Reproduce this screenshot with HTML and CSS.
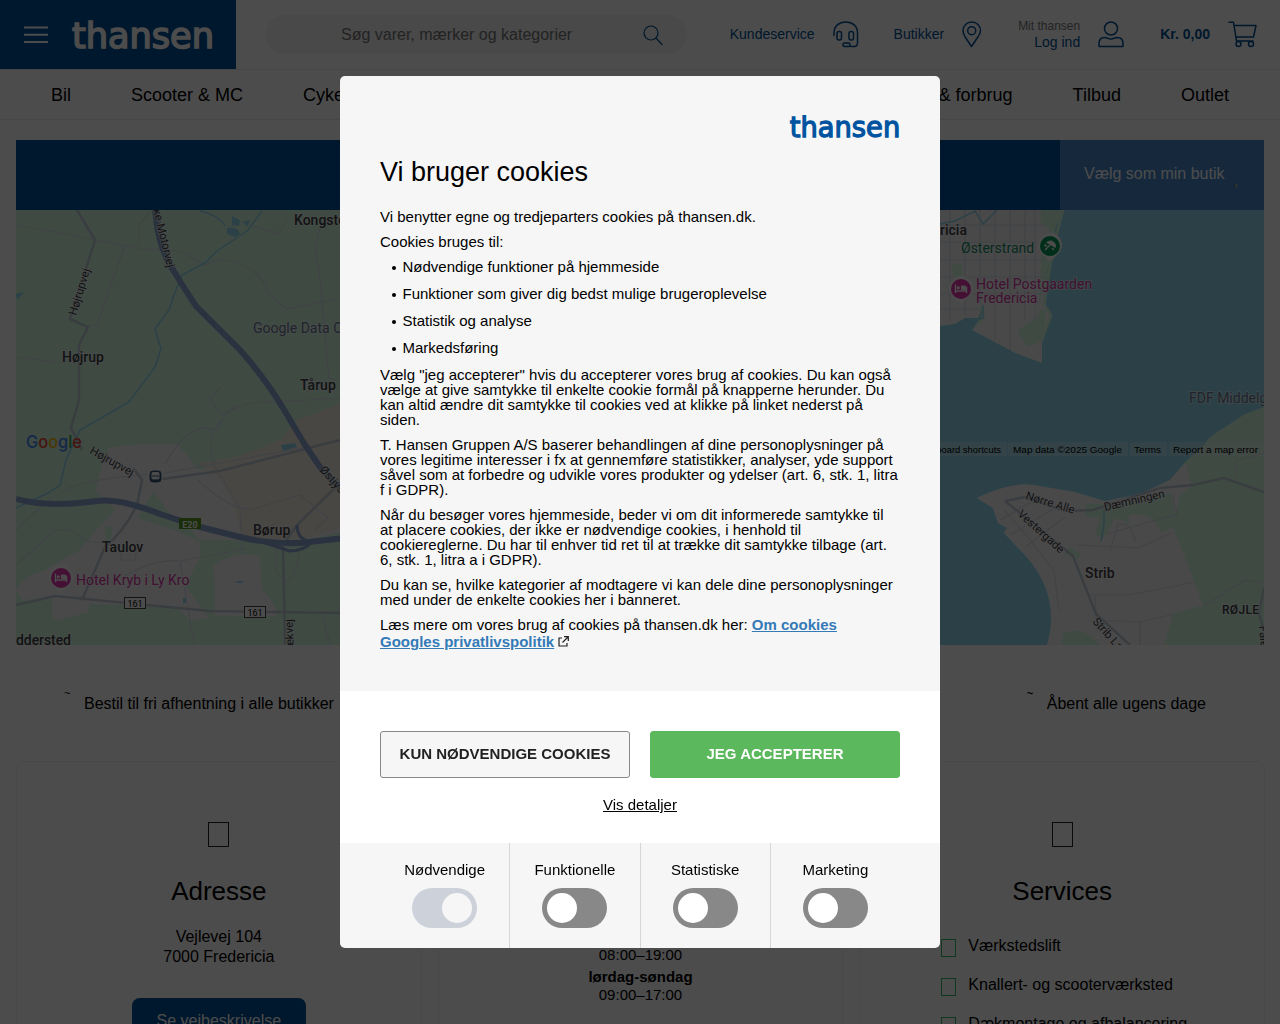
FILE: index.html
```html
<!DOCTYPE html>
<html lang="da">
<head>
<meta charset="utf-8">
<title>thansen</title>
<link rel="stylesheet" href="styles.css">
</head>
<body>
<div class="page">
  <header class="header">
    <div class="brand">
      <svg class="burger" width="24" height="18" viewBox="0 0 24 18"><path d="M0 1.5h24M0 8.8h24M0 16h24"/></svg>
      <svg class="logo" width="144" height="30" viewBox="0 0 144 30"><text x="1" y="27.500" textLength="142" lengthAdjust="spacingAndGlyphs">thansen</text></svg>
    </div>
    <div class="search">
      <span class="search-text">Søg varer, mærker og kategorier</span>
      <svg class="line-icon search-icon" width="22" height="22" viewBox="0 0 22 22"><circle cx="9" cy="9" r="7"/><path d="M14 14l6 6.500"/></svg>
    </div>
    <div class="tools">
      <span class="tool service"><span>Kundeservice</span>
        <svg class="line-icon" width="27" height="27" viewBox="0 0 27 27"><path d="M1 14.500V12C1 5 6 1 12.800 1S24.500 5 24.500 12v10q0 3.500-3.500 3.500h-3.500"/><rect x="4" y="10.500" width="4.500" height="8.500" rx="2"/><rect x="16" y="10.500" width="4.500" height="8.500" rx="2"/><rect x="10" y="22" width="7" height="3.500" rx="1.500"/></svg>
      </span>
      <span class="tool shops"><span>Butikker</span>
        <svg class="line-icon" width="20" height="27" viewBox="0 0 20 27"><path d="M9.500 25.500L3.500 16.500Q1 12.500 1 9.500a8.700 8.500 0 0 1 17.500 0q0 3-3 7z"/><circle cx="9.700" cy="9.700" r="4"/></svg>
      </span>
      <span class="tool account"><span class="account-text"><small>Mit thansen</small>Log ind</span>
        <svg class="line-icon" width="27" height="27" viewBox="0 0 27 27"><circle cx="13" cy="7.500" r="6.500"/><path d="M1 25.500v-2.500q0-6.500 5.500-6.500 2 0 3.500.8t3 .7 3-.7 3.500-.8q5.500 0 5.500 6.500v2.500z"/></svg>
      </span>
      <span class="tool basket"><b>Kr. 0,00</b>
        <svg class="line-icon" width="29" height="27" viewBox="0 0 29 27"><path d="M1 1.200h4.500L8.500 20H25M6.200 4.500H28L25.500 16H8"/><circle cx="10.500" cy="23" r="2.500"/><circle cx="23" cy="23" r="2.500"/></svg>
      </span>
    </div>
  </header>
  <nav class="nav">
    <div class="nav-group"><span>Bil</span><span>Scooter &amp; MC</span><span>Cykel</span></div>
    <div class="nav-group"><span>Olie &amp; forbrug</span><span>Tilbud</span><span>Outlet</span></div>
  </nav>
  <main class="content">
    <div class="band"><div class="choose"><span>Vælg som min butik</span><i>,</i></div></div>
    <svg class="map" width="1248" height="435" viewBox="16 210 1248 435">
      <rect class="land" x="16" y="210" width="1248" height="435"/>
      <g class="urban">
        <path d="M16 590Q25 575 45 570L80 550Q95 530 115 510L95 490 108 448 140 444 178 444 198 470 240 460 300 430 345 400V530L290 545 240 540 200 540 200 558 185 585 208 618 190 620 175 606 90 604 88 612 60 620 52 618 52 597 22 600Z"/>
        <path d="M214 565Q235 550 260 556L262 590Q278 605 277 616H215Z"/>
        <path d="M940 210H1060L1052 228 1052 252 1046 270V305L1051 314 1042 338V363L1015 353 972 330 985 318 984 306H980V318L965 324 940 326Z"/>
      </g>
      <path class="industry" d="M195 464L240 456 280 440 297 420 345 402V527L300 540 242 537 232 500Q215 465 195 464Z"/>
      <path class="land" d="M154 491L168 512 190 529 200 542 175 530 137 518ZM105 525l8 2-3 15-5-3z"/>
      <path class="water" d="M1061 210H1264V407L1245 414 1222 429Q1210 435 1204 445L1185 462 1170 480 1140 495 1105 502 1075 493 1025 484Q998 487 977 498L993 508 998 523 1007 528 1004 533 1018 547Q1066 590 1047 645H940V326L955 324 965 318 978 318 984 306 980 318 972 330 1015 353 1042 363V338L1051 314 1046 305V270L1060 250 1055 230Z"/>
      <path class="urban" d="M1047 645Q1063 590 1016 546L1004 533 1007 528 998 523 993 508 977 498Q1010 482 1034 485L1075 492 1105 501 1140 494 1170 480 1186 463 1192 486 1180 495 1173 527 1184 555 1203 605 1173 614 1164 645Z"/>
      <path class="land" d="M1086 503l24 2 18 8 1 10-14-5-11 20-9-4 5-16-15-1zM1110 507l60-14 8 32-17 8q-5-20-30-19l-7 7zM1070 547l12 8-6 5-12-7zM1061 645l2-12q22-8 36 12zM1041 210h24l-13 23-12-12zM1050 251l-4 30-8 27 8 3-3 29-15 7-11-16 22-16 2-60zM952 264l10 1v13l-9-2z"/>
      <path class="park" d="M1058 212l4 1-10 40-8 52 7 10-10 27"/>
      <g class="road minor">
        <path d="M16 225L145 249 180 251 205 265 220 260Q258 262 270 295L287 309 345 297M125 245L97 325 88 325M139 245V225L151 211M16 357L62 363M324 220q-13 25-5 50l10 108 16 5M250 225l27 9 12-16M221 387l-11 12 11 15 16-6 12-5 96-5M237 405q-14 10-20 25M16 530Q55 490 80 484 120 475 160 474L345 440M165 464Q190 420 214 430M16 565L55 530 70 530 90 542H110M221 420Q205 440 214 465L240 508 242 555M198 480Q240 520 265 505L300 495 328 518 315 530M121 550v10h14l3-20M121 578q35-20 60-17L250 548M180 562l14 83M276 545v25q10 20 20 0l4-20M322 615l8 30"/>
        <path d="M940 225h105M940 242h105M940 260h105M940 277h105M940 294h105M950 210v110M965 210v105M980 210v95M995 210v130M1010 210v140M1025 210v110M1035 210v110M940 309h40M1172 494l5 20-70 20M1005 511l22 25 27 35 5 40M1000 520l35-20M1010 535l45-27M1025 547l40-30M1078 545l60 3 34-15M1110 550l8-25q14-5 17 17M1088 595h40l68-13M1095 620l45 2 34-8M1095 595l2 35M1140 622v23M1236 480v-19l28-8M1205 605l40-25 19 3"/>
      </g>
      <g class="road">
        <path d="M77 210L95 240 83 278 70 319 88 327 79 345V400L71 428 82 450M135 470L142 480 137 505Q125 530 105 547L82 600M16 605L55 596 137 604 210 611 345 613M285 645L283 545 297 525 345 478M340 440L220 471 155 480"/>
        <path d="M1005 501l20-4 40 14 28-1 67-22 33-3 31-7 43 15M1005 501l68 55 23 58 34 31M1264 588l-5 25 5 18"/>
      </g>
      <path class="river" d="M200 211q20 5 25 15M262 211l-15 20-30 20-12 12-23 12-8 20-5 15-14 19 6 20-6 18-26 35L80 430l-14 30-6 25-12 8-32 15M940 224l15-3 20-10 8 13 15-15h20M1104 510v15l-3 16M983 305v13l-35 10"/>
      <path class="water" d="M232 216l8 4-1 6-7-1zM242 222l8-2-2 6zM227 228q10-2 13 6l-5 3-8-3zM16 294l8-2-7 8zM281 445l14-2 2 4-14 4zM237 581l7 0-2 2-6 0zM183 598h3v5h-3z"/>
      <g class="motorway">
        <path d="M155 210Q158 245 170 265T196 306L240 350Q265 378 283 408L305 445 320 467 345 493"/>
        <path d="M16 499Q35 504 55 504T97 501 160 514L200 527 240 537Q267 544 300 543L345 538"/>
        <path class="ramp" d="M265 543q20 6 24 8 15 0 23-9M297 525q0 15 15 17"/>
      </g>
      <g class="town">
        <text x="294" y="225">Kongsted</text><text x="62" y="362">Højrup</text><text x="300" y="390">Tårup</text>
        <text x="102" y="552">Taulov</text><text x="253" y="535">Børup</text><text x="16" y="645" textLength="55">ddersted</text>
        <text x="940" y="235">ricia</text><text x="1085" y="578">Strib</text><text class="small-town" x="1222" y="614" textLength="37">RØJLE</text>
      </g>
      <text class="grey" x="253" y="333">Google Data Center</text><text class="grey" x="1189" y="403">FDF Middelgaard</text>
      <g class="street">
        <text transform="translate(76 316) rotate(-73)">Højrupvej</text><text transform="translate(153 210) rotate(76)">ke·Motorvej</text>
        <text transform="translate(89 453) rotate(29)">Højrupvej</text><text transform="translate(319 470) rotate(49)">Østjyske</text>
        <text transform="translate(294 656) rotate(-92)">Bækvej</text><text transform="translate(1025 499) rotate(17)">Nørre Alle</text>
        <text transform="translate(1017 515) rotate(42)">Vestergade</text><text transform="translate(1105 511) rotate(-13)">Dæmningen</text>
        <text transform="translate(1092 622) rotate(48)">Strib Landevej</text><text transform="translate(1259 626) rotate(85)">Falen</text>
      </g>
      <text class="beach" x="961" y="253">Østerstrand</text>
      <g class="hotel"><text x="76" y="585">Hotel Kryb i Ly Kro</text><text x="976" y="289">Hotel Postgaarden</text><text x="976" y="303">Fredericia</text></g>
      <g class="pin pink" transform="translate(61 578)"><path d="M0 15L-9 7a12 12 0 1 1 18 0z"/><circle r="10"/><path class="glyph" d="M-5.500-4.500V4M5.500 4V-1.500H0M-5.500 2H5.500"/><path class="dot" d="M0-3.500h3.500q2 0 2 2V1H0z"/><circle class="dot" cx="-2.700" cy="-1.200" r="1.600"/></g>
      <g class="pin pink" transform="translate(961 289)"><path d="M0 15L-9 7a12 12 0 1 1 18 0z"/><circle r="10"/><path class="glyph" d="M-5.500-4.500V4M5.500 4V-1.500H0M-5.500 2H5.500"/><path class="dot" d="M0-3.500h3.500q2 0 2 2V1H0z"/><circle class="dot" cx="-2.700" cy="-1.200" r="1.600"/></g>
      <g class="pin green" transform="translate(1050 246)"><path d="M0 15L-9 7a12 12 0 1 1 18 0z"/><circle r="10"/><path class="dot" d="M-4-3.500Q0-7 4-4 7-1 5.500 2z"/><path class="glyph" d="M0-1L-5 4M2 2l2 2"/><circle class="dot" cx="-4.500" cy="-.5" r="1.200"/></g>
      <g class="station"><rect x="149" y="470" width="13" height="13" rx="4"/><rect class="train" x="152" y="472.500" width="7" height="6.500" rx="1"/><path d="M152 476h7M153 481l1-1.500M158 481l-1-1.500"/></g>
      <rect class="e-sign" x="179" y="518" width="22" height="11"/><text class="e-text" x="190" y="527.500">E20</text>
      <g class="number"><rect x="124.500" y="597.500" width="21" height="11"/><text x="135" y="606.500">161</text><rect x="244.500" y="606.500" width="21" height="11"/><text x="255" y="615.500">161</text></g>
      <text class="google" x="26" y="448" textLength="56" lengthAdjust="spacingAndGlyphs"><tspan fill="#4285f4">G</tspan><tspan fill="#ea4335">o</tspan><tspan fill="#fbbc04">o</tspan><tspan fill="#4285f4">g</tspan><tspan fill="#34a853">l</tspan><tspan fill="#ea4335">e</tspan></text>
      <g class="legal"><path d="M900 442h107v14H900zM1008 442h120v14h-120zM1130 442h37v14h-37zM1169 442h95v14h-95z"/><text x="920" y="453" textLength="81" lengthAdjust="spacingAndGlyphs">Keyboard shortcuts</text><text x="1013" y="453" textLength="109" lengthAdjust="spacingAndGlyphs">Map data ©2025 Google</text><text x="1134" y="453" textLength="27" lengthAdjust="spacingAndGlyphs">Terms</text><text x="1173" y="453" textLength="85" lengthAdjust="spacingAndGlyphs">Report a map error</text></g>
    </svg>
    <div class="perks">
      <div class="perk"><i>~</i><span>Bestil til fri afhentning i alle butikker</span></div>
      <div class="perk right"><i>~</i><span>Åbent alle ugens dage</span></div>
    </div>
    <div class="cards">
      <section class="card"><div class="box"></div><h2>Adresse</h2><p>Vejlevej 104<br>7000 Fredericia</p><div class="directions">Se vejbeskrivelse</div></section>
      <section class="card"><div class="hours"><span>08:00–19:00</span><b>lørdag-søndag</b><span>09:00–17:00</span></div></section>
      <section class="card"><div class="box"></div><h2>Services</h2><ul class="services"><li>Værkstedslift</li><li>Knallert- og scooterværksted</li><li>Dækmontage og afbalancering</li></ul></section>
    </div>
  </main>
</div>
<div class="overlay">
  <div class="modal">
    <div class="intro">
      <svg class="logo modal-logo" width="112" height="24" viewBox="0 0 142 30"><text x="1" y="28" textLength="140" lengthAdjust="spacingAndGlyphs">thansen</text></svg>
      <h1>Vi bruger cookies</h1>
      <p>Vi benytter egne og tredjeparters cookies på thansen.dk.</p>
      <p>Cookies bruges til:</p>
      <ul><li>Nødvendige funktioner på hjemmeside</li><li>Funktioner som giver dig bedst mulige brugeroplevelse</li><li>Statistik og analyse</li><li>Markedsføring</li></ul>
      <p>Vælg "jeg accepterer" hvis du accepterer vores brug af cookies. Du kan også vælge at give samtykke til enkelte cookie formål på knapperne herunder. Du kan altid ændre dit samtykke til cookies ved at klikke på linket nederst på siden.</p>
      <p>T. Hansen Gruppen A/S baserer behandlingen af dine personoplysninger på vores legitime interesser i fx at gennemføre statistikker, analyser, yde support såvel som at forbedre og udvikle vores produkter og ydelser (art. 6, stk. 1, litra f i GDPR).</p>
      <p>Når du besøger vores hjemmeside, beder vi om dit informerede samtykke til at placere cookies, der ikke er nødvendige cookies, i henhold til cookiereglerne. Du har til enhver tid ret til at trække dit samtykke tilbage (art. 6, stk. 1, litra a i GDPR).</p>
      <p>Du kan se, hvilke kategorier af modtagere vi kan dele dine personoplysninger med under de enkelte cookies her i banneret.</p>
      <p class="links">Læs mere om vores brug af cookies på thansen.dk her: <a>Om cookies</a><br><a>Googles privatlivspolitik</a> <svg width="11" height="11" viewBox="0 0 11 11"><path d="M4 2H1v8h8V7M6 .7h4.300V5M10 1L4.500 6.500"/></svg></p>
    </div>
    <div class="actions">
      <div class="buttons"><div class="btn">KUN NØDVENDIGE COOKIES</div><div class="btn accept">JEG ACCEPTERER</div></div>
      <span class="details">Vis detaljer</span>
    </div>
    <div class="choices">
      <div class="choice"><span>Nødvendige</span><div class="toggle locked"></div></div>
      <div class="choice"><span>Funktionelle</span><div class="toggle"></div></div>
      <div class="choice"><span>Statistiske</span><div class="toggle"></div></div>
      <div class="choice"><span>Marketing</span><div class="toggle"></div></div>
    </div>
  </div>
</div>
</body>
</html>
```
FILE: styles.css
```css
*, *::before { box-sizing: border-box; }
body { margin: 0; font-family: "Liberation Sans", Arial, sans-serif; color: #000; background: #fff; overflow: hidden; }
h1, h2, p, ul { margin: 0; padding: 0; font-weight: 400; }
ul { list-style: none; }
i { font-style: normal; }
.page { height: 1024px; overflow: hidden; }

.header { display: flex; height: 70px; border-bottom: 1px solid #ececec; align-items: center; }
.brand { width: 236px; height: 69px; background: #005096; display: flex; align-items: center; padding-left: 24px; gap: 23px; flex: none; }
.burger { stroke: #fff; stroke-width: 2; }
.logo { font: 35px "DejaVu Sans", sans-serif; fill: #fff; stroke: #fff; stroke-width: 1.6; }
.search { margin-left: 30px; width: 421px; height: 39px; border-radius: 20px; background: #f3f3f3; display: flex; align-items: center; padding: 0 23px 0 75px; justify-content: space-between; font-size: 16px; color: #757575; flex: none; }
.line-icon { fill: none; stroke: #005096; stroke-width: 1.5; stroke-linejoin: round; stroke-linecap: round; flex: none; }
.search-icon { stroke-width: 1.2; }
.tools { flex: 1; display: flex; justify-content: flex-end; padding-right: 23px; color: #005096; font-size: 14px; }
.tool { display: flex; align-items: center; gap: 18px; white-space: nowrap; }
.tool > span:not(.account-text), .tool > b { padding-bottom: 2px; }
.shops { margin-left: 34px; }
.account { margin-left: 36px; }
.basket { margin-left: 35px; }
.account-text { display: flex; flex-direction: column; align-items: flex-end; line-height: 16px; }
.account-text small { font-size: 12px; color: #777; line-height: 15px; }

.nav { height: 50px; border-bottom: 1px solid #ececec; display: flex; justify-content: space-between; align-items: center; padding: 2px 51px 0; font-size: 18px; }
.nav-group { display: flex; gap: 60px; }

.content { padding: 20px 16px 0; }
.band { height: 70px; background: #005096; display: flex; justify-content: flex-end; }
.choose { width: 204px; background: #4788ca; color: #fff; padding: 0 24px; display: flex; align-items: center; gap: 10px; white-space: nowrap; }
.choose span { padding-bottom: 3px; }
.choose i { color: #fc0; font-size: 12px; padding-top: 14px; }

.map { display: block; font-family: Roboto, sans-serif; }
.land { fill: #d3f8e2; }
.urban { fill: #f6f4f7; }
.industry { fill: #f5ede3; }
.water { fill: #90daee; }
.road { fill: none; stroke: #c2cbd7; stroke-width: 2.5; }
.minor { stroke: #d8dfe7; stroke-width: 1.2; }
.river { fill: none; stroke: #90daee; stroke-width: 1.5; }
.park { fill: none; stroke: #d3f8e2; stroke-width: 3; }
.motorway { fill: none; stroke: #8da5d3; stroke-width: 6; }
.motorway .ramp { stroke-width: 3; }
.map text { paint-order: stroke; stroke: #fff; stroke-width: 1.5; stroke-opacity: .7; }
.town { font-size: 14px; font-weight: 500; fill: #3c4043; }
.map .small-town { font-size: 12px; }
.grey { font-size: 14px; fill: #66758f; }
.street { font-size: 11.5px; fill: #3c4043; }
.beach { font-size: 14px; fill: #168a61; }
.hotel { font-size: 14px; fill: #d734a4; }
.pin > path:first-child { fill: #fff; }
.pink circle { fill: #e536ac; }
.green circle { fill: #009a5c; }
.pin .glyph { fill: none; stroke: #fff; stroke-width: 1.5; }
.pin .dot { fill: #fff; }
.station rect { fill: #3b567a; stroke: #fff; stroke-width: 1; }
.station .train { fill: #fff; }
.station path { stroke: #3b567a; }
.e-sign { fill: #579b21; }
.map .e-text { fill: #fff; font-size: 9px; font-weight: 700; text-anchor: middle; stroke: none; }
.number rect { fill: #fff; stroke: #444; }
.map .number text { font-size: 9px; text-anchor: middle; stroke: none; }
.map .google { font: 500 17px Inter, sans-serif; stroke: none; }
.legal { font: 9px "Liberation Sans", sans-serif; }
.legal path { fill: #f5f5f5; fill-opacity: .3; }
.map .legal text { stroke: none; }

.perks { height: 115px; display: flex; justify-content: space-between; padding: 49px 58px 0 48px; }
.perk { display: flex; gap: 14px; font-size: 16px; line-height: 20px; height: 20px; }
.perk i { font-size: 11px; line-height: 2px; width: 6px; margin-top: -2px; }
.right i { font-weight: 700; }
.cards { display: grid; grid-template-columns: repeat(3, 1fr); gap: 16px; margin-right: -1px; }
.card { height: 500px; margin-top: 1px; border: 1px solid #f1f1f1; border-radius: 8px; padding-top: 60px; display: flex; flex-direction: column; align-items: center; }
.box { width: 21px; height: 25px; border: 1px solid #222; flex: none; }
.card h2 { font-size: 26px; line-height: 30px; margin-top: 29px; }
.card p { font-size: 16px; line-height: 20px; margin-top: 21px; text-align: center; }
.directions { margin-top: 31px; height: 46px; border-radius: 8px; background: #005096; color: #fff; padding: 0 25px; line-height: 46px; font-size: 16px; }
.hours { display: flex; flex-direction: column; align-items: center; font-size: 15px; line-height: 18px; padding-top: 124px; }
.hours b { margin-top: 4px; }
.services { align-self: flex-start; margin: 20px 0 0 81px; font-size: 16px; }
.services li { display: flex; align-items: center; gap: 12px; height: 39px; line-height: 39px; white-space: nowrap; }
.services li::before { content: ""; width: 15px; height: 18px; border: 1px solid #36bb6d; margin-top: 4px; flex: none; }

.overlay { position: fixed; inset: 0; background: rgba(0, 0, 0, .7); display: flex; align-items: center; justify-content: center; }
.modal { width: 600px; height: 872px; background: #f6f6f6; border-radius: 5px; overflow: hidden; font-size: 15px; line-height: 15px; display: flex; flex-direction: column; }
.intro { height: 615px; padding: 39px 40px 0; flex: none; }
.modal-logo { display: block; margin-left: auto; margin-right: -1px; fill: #0053a0; stroke: #0053a0; }
.intro h1 { font-size: 27px; line-height: 32px; margin: 17px 0 21px; }
.intro p { margin-bottom: 10px; }
.intro ul { padding-left: 11.5px; }
.intro li { margin-bottom: 12px; display: flex; align-items: center; gap: 7px; }
.intro li::before { content: ""; width: 4px; height: 4px; border-radius: 50%; background: #000; margin-top: 3px; }
.intro .links { line-height: 17px; margin-top: -11px; padding-top: 10px; }
.links a { color: #337ab7; font-weight: 700; text-decoration: underline; }
.links svg { fill: none; stroke: #222; stroke-width: 1.2; vertical-align: 0; }
.actions { height: 152px; background: #fff; padding: 40px 40px 0; flex: none; text-align: center; }
.buttons { display: flex; gap: 20px; margin-bottom: 19px; }
.btn { width: 250px; height: 47px; border: 1px solid #888; border-radius: 3px; background: #f6f6f6; line-height: 43px; font-weight: 700; color: #222; }
.btn.accept { background: #5cb85c; border-color: #5cb85c; color: #fff; }
.details { text-decoration: underline; }
.choices { flex: 1; display: grid; grid-template-columns: repeat(4, 130.25px); padding-left: 40px; }
.choice { border-right: 1px solid #d6d6d6; display: flex; flex-direction: column; align-items: center; padding-top: 19px; gap: 11px; }
.choice:last-child { border-color: transparent; }
.toggle { width: 65px; height: 40px; border-radius: 20px; background: #888; padding: 5px; display: flex; }
.toggle::before { content: ""; width: 30px; height: 30px; border-radius: 50%; background: #fff; }
.locked { background: #cdd2da; justify-content: flex-end; }
.locked::before { background: #f6f6f6; }
```
